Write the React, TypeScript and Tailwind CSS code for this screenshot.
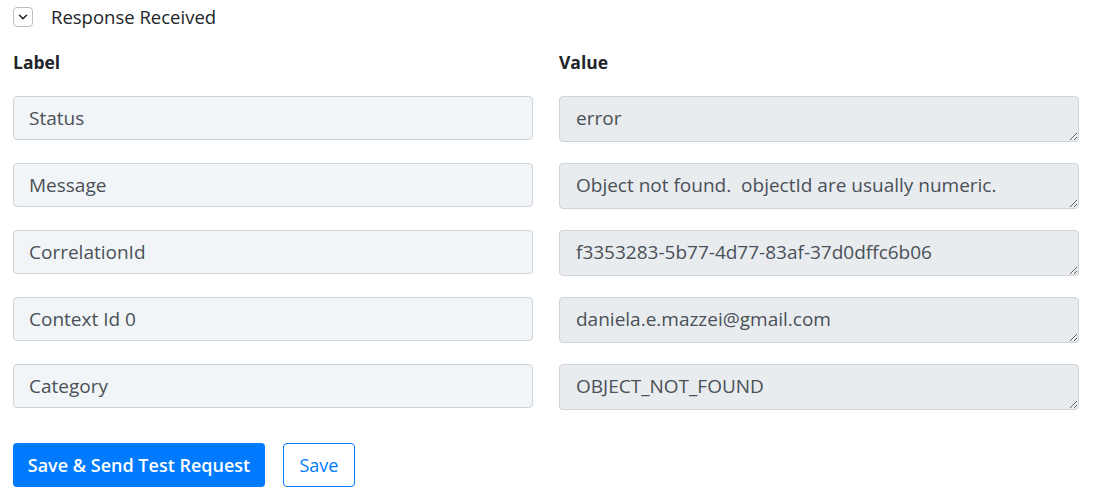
import { ChevronDown } from "lucide-react";

interface Field {
  label: string;
  value: string;
}

const fields: Field[] = [
  { label: "Status", value: "error" },
  { label: "Message", value: "Object not found.  objectId are usually numeric." },
  { label: "CorrelationId", value: "f3353283-5b77-4d77-83af-37d0dffc6b06" },
  { label: "Context Id 0", value: "daniela.e.mazzei@gmail.com" },
  { label: "Category", value: "OBJECT_NOT_FOUND" },
];

export default function App() {
  return (
    <div className="min-h-[500px] bg-white px-[13px] pt-[7px] font-['Open_Sans','Noto_Sans',sans-serif] text-[#212529]">
      <div className="flex items-center gap-[18px]">
        <span className="flex h-5 w-5 items-center justify-center rounded-[4px] border border-[#b9bec4]">
          <ChevronDown size={14} strokeWidth={2.6} className="text-[#222]" />
        </span>
        <span className="text-[18.5px] leading-5">Response Received</span>
      </div>

      <div className="mt-[24px] grid w-[1066px] grid-cols-2 gap-x-[26px]">
        <div className="text-[17.5px] font-bold leading-[22px]">Label</div>
        <div className="text-[17.5px] font-bold leading-[22px]">Value</div>
      </div>

      <div className="mt-[23px] flex w-[1066px] flex-col gap-[21px]">
        {fields.map((f) => (
          <div key={f.label} className="grid grid-cols-2 gap-x-[26px]">
            <input
              type="text"
              readOnly
              value={f.label}
              className="h-[44px] w-full rounded-[4px] border border-[#ced4da] bg-[#f2f5f8] px-[15px] text-[19px] text-[#495057] outline-none"
            />
            <textarea
              readOnly
              value={f.value}
              rows={1}
              className="h-[46px] w-full rounded-[4px] border border-[#ced4da] bg-[#e9ecef] px-[16px] py-[7px] text-[19px] leading-[28px] text-[#495057] outline-none"
            />
          </div>
        ))}
      </div>

      <div className="mt-[33px] flex items-center gap-[18px]">
        <button className="h-[44px] w-[252px] rounded-[4px] bg-[#007bff] text-[18px] font-semibold text-white">
          Save &amp; Send Test Request
        </button>
        <button className="h-[44px] w-[72px] rounded-[4px] border border-[#007bff] bg-white text-[18px] text-[#007bff]">
          Save
        </button>
      </div>
    </div>
  );
}
